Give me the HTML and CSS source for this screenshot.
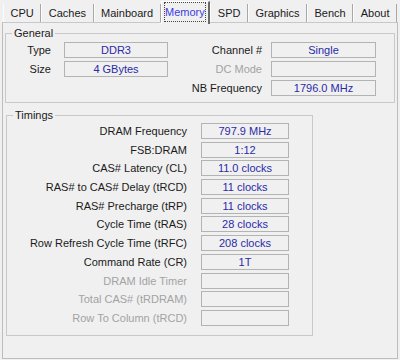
FILE: index.html
```html
<!DOCTYPE html>
<html lang="en">
<head>
  <meta charset="UTF-8">
  <title>CPU-Z Memory</title>
  <link rel="stylesheet" href="styles.css">
</head>
<body>
  <ul class="tabs">
    <li class="tab">CPU</li>
    <li class="tab">Caches</li>
    <li class="tab">Mainboard</li>
    <li class="tab active"><span class="focus">Memory</span></li>
    <li class="tab">SPD</li>
    <li class="tab">Graphics</li>
    <li class="tab">Bench</li>
    <li class="tab">About</li>
  </ul>

  <div class="page">
    <fieldset class="group general">
      <legend>General</legend>
      <div class="general-grid">
        <span class="label">Type</span>
        <span class="value">DDR3</span>
        <span class="label right">Channel #</span>
        <span class="value">Single</span>

        <span class="label">Size</span>
        <span class="value">4 GBytes</span>
        <span class="label right disabled">DC Mode</span>
        <span class="value"></span>

        <span class="label right nb">NB Frequency</span>
        <span class="value">1796.0 MHz</span>
      </div>
    </fieldset>

    <fieldset class="group timings">
      <legend>Timings</legend>
      <div class="timings-grid">
        <span class="label">DRAM Frequency</span><span class="value">797.9 MHz</span>
        <span class="label">FSB:DRAM</span><span class="value">1:12</span>
        <span class="label">CAS# Latency (CL)</span><span class="value">11.0 clocks</span>
        <span class="label">RAS# to CAS# Delay (tRCD)</span><span class="value">11 clocks</span>
        <span class="label">RAS# Precharge (tRP)</span><span class="value">11 clocks</span>
        <span class="label">Cycle Time (tRAS)</span><span class="value">28 clocks</span>
        <span class="label">Row Refresh Cycle Time (tRFC)</span><span class="value">208 clocks</span>
        <span class="label">Command Rate (CR)</span><span class="value">1T</span>
        <span class="label disabled">DRAM Idle Timer</span><span class="value"></span>
        <span class="label disabled">Total CAS# (tRDRAM)</span><span class="value"></span>
        <span class="label disabled">Row To Column (tRCD)</span><span class="value"></span>
      </div>
    </fieldset>
  </div>
</body>
</html>
```

FILE: styles.css
```css
body {
  margin: 0;
  background-color: #f0f0f0;
  font-family: "Liberation Sans", Arial, sans-serif;
  font-size: 11px;
  color: #1a1a1a;
}

/* tab strip */
.tabs {
  display: flex;
  height: 22px;
  margin: 0;
  padding: 0 3px;
  list-style: none;
}

.tab {
  flex: 1 1 auto;
  height: 18px;
  margin-top: 4px;
  padding: 0 6px;
  line-height: 18px;
  text-align: center;
  border-left: 1px solid #fcfcfc;
  border-right: 1px solid #a8a8a8;
}

.tab.active {
  position: relative;
  height: 22px;
  margin-top: 1px;
  margin-bottom: -1px;
  padding: 0 2px;
  line-height: 20px;
  background-color: #f0f0f0;
  border-left: 1px solid #fff;
  border-top: 1px solid #fff;
  border-right: 2px solid #6a6a6a;
  color: #3b3be6;
}

.tab .focus {
  display: block;
  height: 18px;
  line-height: 18px;
  border: 1px dotted #444;
}

/* tab page */
.page {
  height: 337px;
  box-sizing: border-box;
  margin: 0 2px;
  border: 1px solid #bcbcbc;
  border-top-color: #c8c8c8;
}

.group {
  min-width: 0;
  margin: 0;
  padding: 0;
  border: 1px solid #c9c9c9;
}

.group legend {
  margin-left: 6px;
  padding: 0 2px;
  line-height: 13px;
  color: #1a1a1a;
}

.general {
  margin: 4px 2px 0 2px;
  padding: 2px 0 6px 0;
}

.timings {
  width: 307px;
  box-sizing: border-box;
  margin: 6px 0 0 3px;
  padding: 1px 0 9px 0;
}

.general-grid {
  display: grid;
  grid-template-columns: 58px 104px 103px 105px;
  row-gap: 3px;
}

.timings-grid {
  display: grid;
  grid-template-columns: 194px 88px;
  row-gap: 2.7px;
}

.label {
  height: 16px;
  line-height: 16px;
  text-align: right;
  white-space: nowrap;
  padding-right: 13px;
}

.general-grid .right {
  padding-right: 9px;
}

.general-grid .nb {
  grid-column: 3;
}

.timings-grid .label {
  padding-right: 14px;
}

.label.disabled {
  color: #a3a3a3;
}

.value {
  height: 16px;
  box-sizing: border-box;
  line-height: 14px;
  text-align: center;
  white-space: nowrap;
  border: 1px solid #b3b3b3;
  background-color: #f0f0f0;
  color: #2a2aa8;
}
```
